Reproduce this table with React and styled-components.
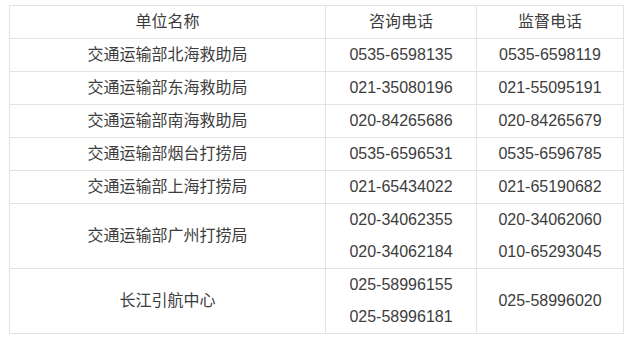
import React from "react";
import styled, { createGlobalStyle } from "styled-components";

const GlobalStyle = createGlobalStyle`
  body {
    margin: 0;
    background: #fff;
    font-family: "Liberation Sans", "Noto Sans CJK SC", sans-serif;
  }
`;

const Page = styled.div`
  padding: 5px 0 0 9px;
`;

const Table = styled.table`
  border-collapse: collapse;
  width: 611px;
  table-layout: fixed;
  color: #3d3d3d;
  font-size: 16px;
`;

const Cell = styled.td`
  border: 1px solid #e3e3e3;
  padding: 0;
  height: 32px;
  line-height: 32px;
  text-align: center;
  vertical-align: middle;
  width: ${(p) => p.$w}px;
`;

const Line = styled.div`
  line-height: 32px;
`;

const rows = [
  ["交通运输部北海救助局", ["0535-6598135"], ["0535-6598119"]],
  ["交通运输部东海救助局", ["021-35080196"], ["021-55095191"]],
  ["交通运输部南海救助局", ["020-84265686"], ["020-84265679"]],
  ["交通运输部烟台打捞局", ["0535-6596531"], ["0535-6596785"]],
  ["交通运输部上海打捞局", ["021-65434022"], ["021-65190682"]],
  ["交通运输部广州打捞局", ["020-34062355", "020-34062184"], ["020-34062060", "010-65293045"]],
  ["长江引航中心", ["025-58996155", "025-58996181"], ["025-58996020"]],
];

export default function App() {
  return (
    <Page>
      <GlobalStyle />
      <Table>
        <tbody>
          <tr>
            <Cell $w={315}>单位名称</Cell>
            <Cell $w={150}>咨询电话</Cell>
            <Cell $w={146}>监督电话</Cell>
          </tr>
          {rows.map(([name, ask, watch]) => (
            <tr key={name}>
              <Cell $w={315}>{name}</Cell>
              <Cell $w={150}>
                {ask.map((n) => (
                  <Line key={n}>{n}</Line>
                ))}
              </Cell>
              <Cell $w={146}>
                {watch.map((n) => (
                  <Line key={n}>{n}</Line>
                ))}
              </Cell>
            </tr>
          ))}
        </tbody>
      </Table>
    </Page>
  );
}
